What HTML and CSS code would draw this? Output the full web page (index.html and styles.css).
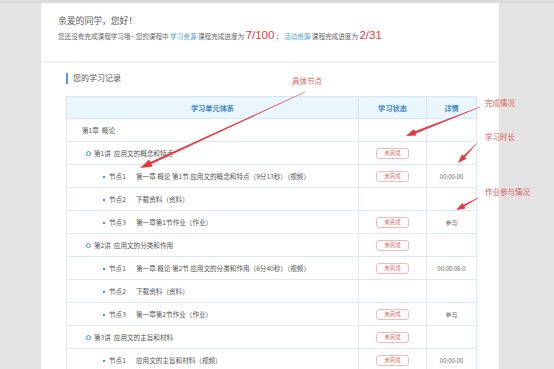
FILE: index.html
```html
<!DOCTYPE html>
<html lang="zh-CN">
<head>
  <meta charset="UTF-8" />
  <title>学习记录</title>
  <link rel="stylesheet" href="styles.css">
</head>
<body>

  <div class="panel">
    <div class="welcome">
      <h1>亲爱的同学，您好！</h1>
      <p class="summary">
        您还没有完成课程学习哦~ 您的课程中 <span class="link">学习资源</span> 课程完成进度为
        <span class="num">7/100</span> ； <span class="link">活动资源</span> 课程完成进度为
        <span class="num">2/31</span>
      </p>
    </div>

    <div class="records">
      <h2><span class="bar"></span>您的学习记录</h2>

      <table class="record-table">
        <thead>
          <tr>
            <th class="col-unit">学习单元体系</th>
            <th class="col-state">学习状态</th>
            <th class="col-detail">详情</th>
          </tr>
        </thead>
        <tbody>
          <tr class="chapter">
            <td>第1章&nbsp;&nbsp;概论</td><td></td><td></td>
          </tr>
          <tr class="lesson">
            <td><span class="ring"></span>第1讲&nbsp;&nbsp;应用文的概念和特点</td>
            <td><span class="badge">未完成</span></td><td></td>
          </tr>
          <tr class="node">
            <td><span class="dot"></span><span class="tag">节点1</span>第一章 概论 第1节 应用文的概念和特点（9分13秒）（视频）</td>
            <td><span class="badge">未完成</span></td><td>00:00:00</td>
          </tr>
          <tr class="node">
            <td><span class="dot"></span><span class="tag">节点2</span>下载资料（资料）</td>
            <td></td><td></td>
          </tr>
          <tr class="node">
            <td><span class="dot"></span><span class="tag">节点3</span>第一章第1节作业（作业）</td>
            <td><span class="badge">未完成</span></td><td>参与</td>
          </tr>
          <tr class="lesson">
            <td><span class="ring"></span>第2讲&nbsp;&nbsp;应用文的分类和作用</td>
            <td><span class="badge">未完成</span></td><td></td>
          </tr>
          <tr class="node">
            <td><span class="dot"></span><span class="tag">节点1</span>第一章 概论 第2节 应用文的分类和作用（6分40秒）（视频）</td>
            <td><span class="badge">未完成</span></td><td>00:00:06.0</td>
          </tr>
          <tr class="node">
            <td><span class="dot"></span><span class="tag">节点2</span>下载资料（资料）</td>
            <td></td><td></td>
          </tr>
          <tr class="node">
            <td><span class="dot"></span><span class="tag">节点3</span>第一章第2节作业（作业）</td>
            <td><span class="badge">未完成</span></td><td>参与</td>
          </tr>
          <tr class="lesson">
            <td><span class="ring"></span>第3讲&nbsp;&nbsp;应用文的主旨和材料</td>
            <td><span class="badge">未完成</span></td><td></td>
          </tr>
          <tr class="node">
            <td><span class="dot"></span><span class="tag">节点1</span>应用文的主旨和材料（视频）</td>
            <td><span class="badge">未完成</span></td><td>00:00:00</td>
          </tr>
        </tbody>
      </table>
    </div>
  </div>

  <!-- 标注 -->
  <svg class="notes" width="554" height="369" viewBox="0 0 554 369">
    <g class="arrow">
      <polygon points="305.1,92.2 151.4,164.1 152.6,166.6 140,168 149.2,159.4 150.4,161.9 304.9,91.8" />
      <polygon points="480.1,107.2 415.7,133.4 416.6,135.6 406,136 414.0,129.1 414.9,131.3 479.9,106.8" />
      <polygon points="478.1,142.1 464.9,157.2 466.5,158.7 458,163 461.9,154.3 463.5,155.8 477.9,141.9" />
      <polygon points="478.1,198.2 464.4,206.6 465.4,208.5 456,210 462.4,202.9 463.4,204.8 477.9,197.8" />
    </g>
    <text x="292" y="84">具体节点</text>
    <text x="485" y="106">完成情况</text>
    <text x="485" y="140">学习时长</text>
    <text x="485" y="195">作业参与情况</text>
  </svg>

</body>
</html>
```

FILE: styles.css
```css
* {
  box-sizing: border-box;
  margin: 0;
  padding: 0;
}

html {
  background: #e3e3e3;
}

body {
  position: relative;
  height: 369px;
  overflow: hidden;
  font-family: "Noto Sans CJK SC", "Noto Sans", sans-serif;
  color: #555;
  border-top: 3px solid #dadada;
}

.panel {
  width: 458px;
  margin-left: 41px;
  min-height: 366px;
  background: #fff;
}

.welcome {
  padding: 11px 0 18px 17px;
  border-bottom: 2px solid #f1f1f1;
}

h1 {
  font-size: 8.8px;
  font-weight: 400;
  line-height: 14px;
  color: #555;
}

.summary {
  font-size: 6.6px;
  line-height: 14px;
  color: #666;
  white-space: nowrap;
}

.summary .link {
  color: #4a9fdc;
}

.summary .num {
  font-family: "Liberation Sans", sans-serif;
  font-size: 11.5px;
  color: #e4393c;
}

.records {
  padding: 9px 23px 0 25px;
}

h2 {
  display: flex;
  align-items: center;
  font-size: 8px;
  font-weight: 400;
  line-height: 12px;
  color: #555;
  margin-bottom: 12px;
}

h2 .bar {
  width: 2px;
  height: 11px;
  background: #4a9fdc;
  margin-right: 5px;
}

.record-table {
  width: 410px;
  border-collapse: collapse;
  table-layout: fixed;
}

.record-table th,
.record-table td {
  border: 1px solid #dde9f3;
  font-size: 6.6px;
  white-space: nowrap;
  overflow: hidden;
}

.record-table th {
  height: 22px;
  background: #eaf6fd;
  color: #3f86c6;
  font-size: 7.2px;
  font-weight: 700;
  text-align: center;
  border-color: #d4e6f3;
}

.col-unit {
  width: 292px;
}

.col-state {
  width: 68px;
}

.col-detail {
  width: 50px;
}

.record-table td {
  height: 23px;
  color: #555;
}

.record-table td + td {
  text-align: center;
  color: #666;
  font-size: 6px;
}

.chapter td:first-child {
  padding-left: 15px;
}

.lesson td:first-child {
  padding-left: 19px;
}

.node td:first-child {
  padding-left: 36px;
}

.ring {
  display: inline-block;
  width: 5px;
  height: 5px;
  border: 1.3px solid #3a9ad9;
  border-radius: 50%;
  margin-right: 3px;
  vertical-align: 0;
}

.dot {
  display: inline-block;
  width: 2px;
  height: 2px;
  background: #3a9ad9;
  margin-right: 4px;
  vertical-align: 1px;
}

.tag {
  display: inline-block;
  width: 27px;
}

.badge {
  display: inline-block;
  width: 33px;
  height: 11px;
  border: 1px solid #f3b9b9;
  border-radius: 3px;
  font-size: 5.5px;
  line-height: 9px;
  color: #e26d6d;
  vertical-align: middle;
}

.notes {
  position: absolute;
  top: -3px;
  left: 0;
  pointer-events: none;
}

.notes .arrow polygon {
  fill: #e8383b;
}

.notes text {
  font-family: "Noto Sans CJK SC", sans-serif;
  font-size: 7.5px;
  fill: #e05a5a;
}
```
